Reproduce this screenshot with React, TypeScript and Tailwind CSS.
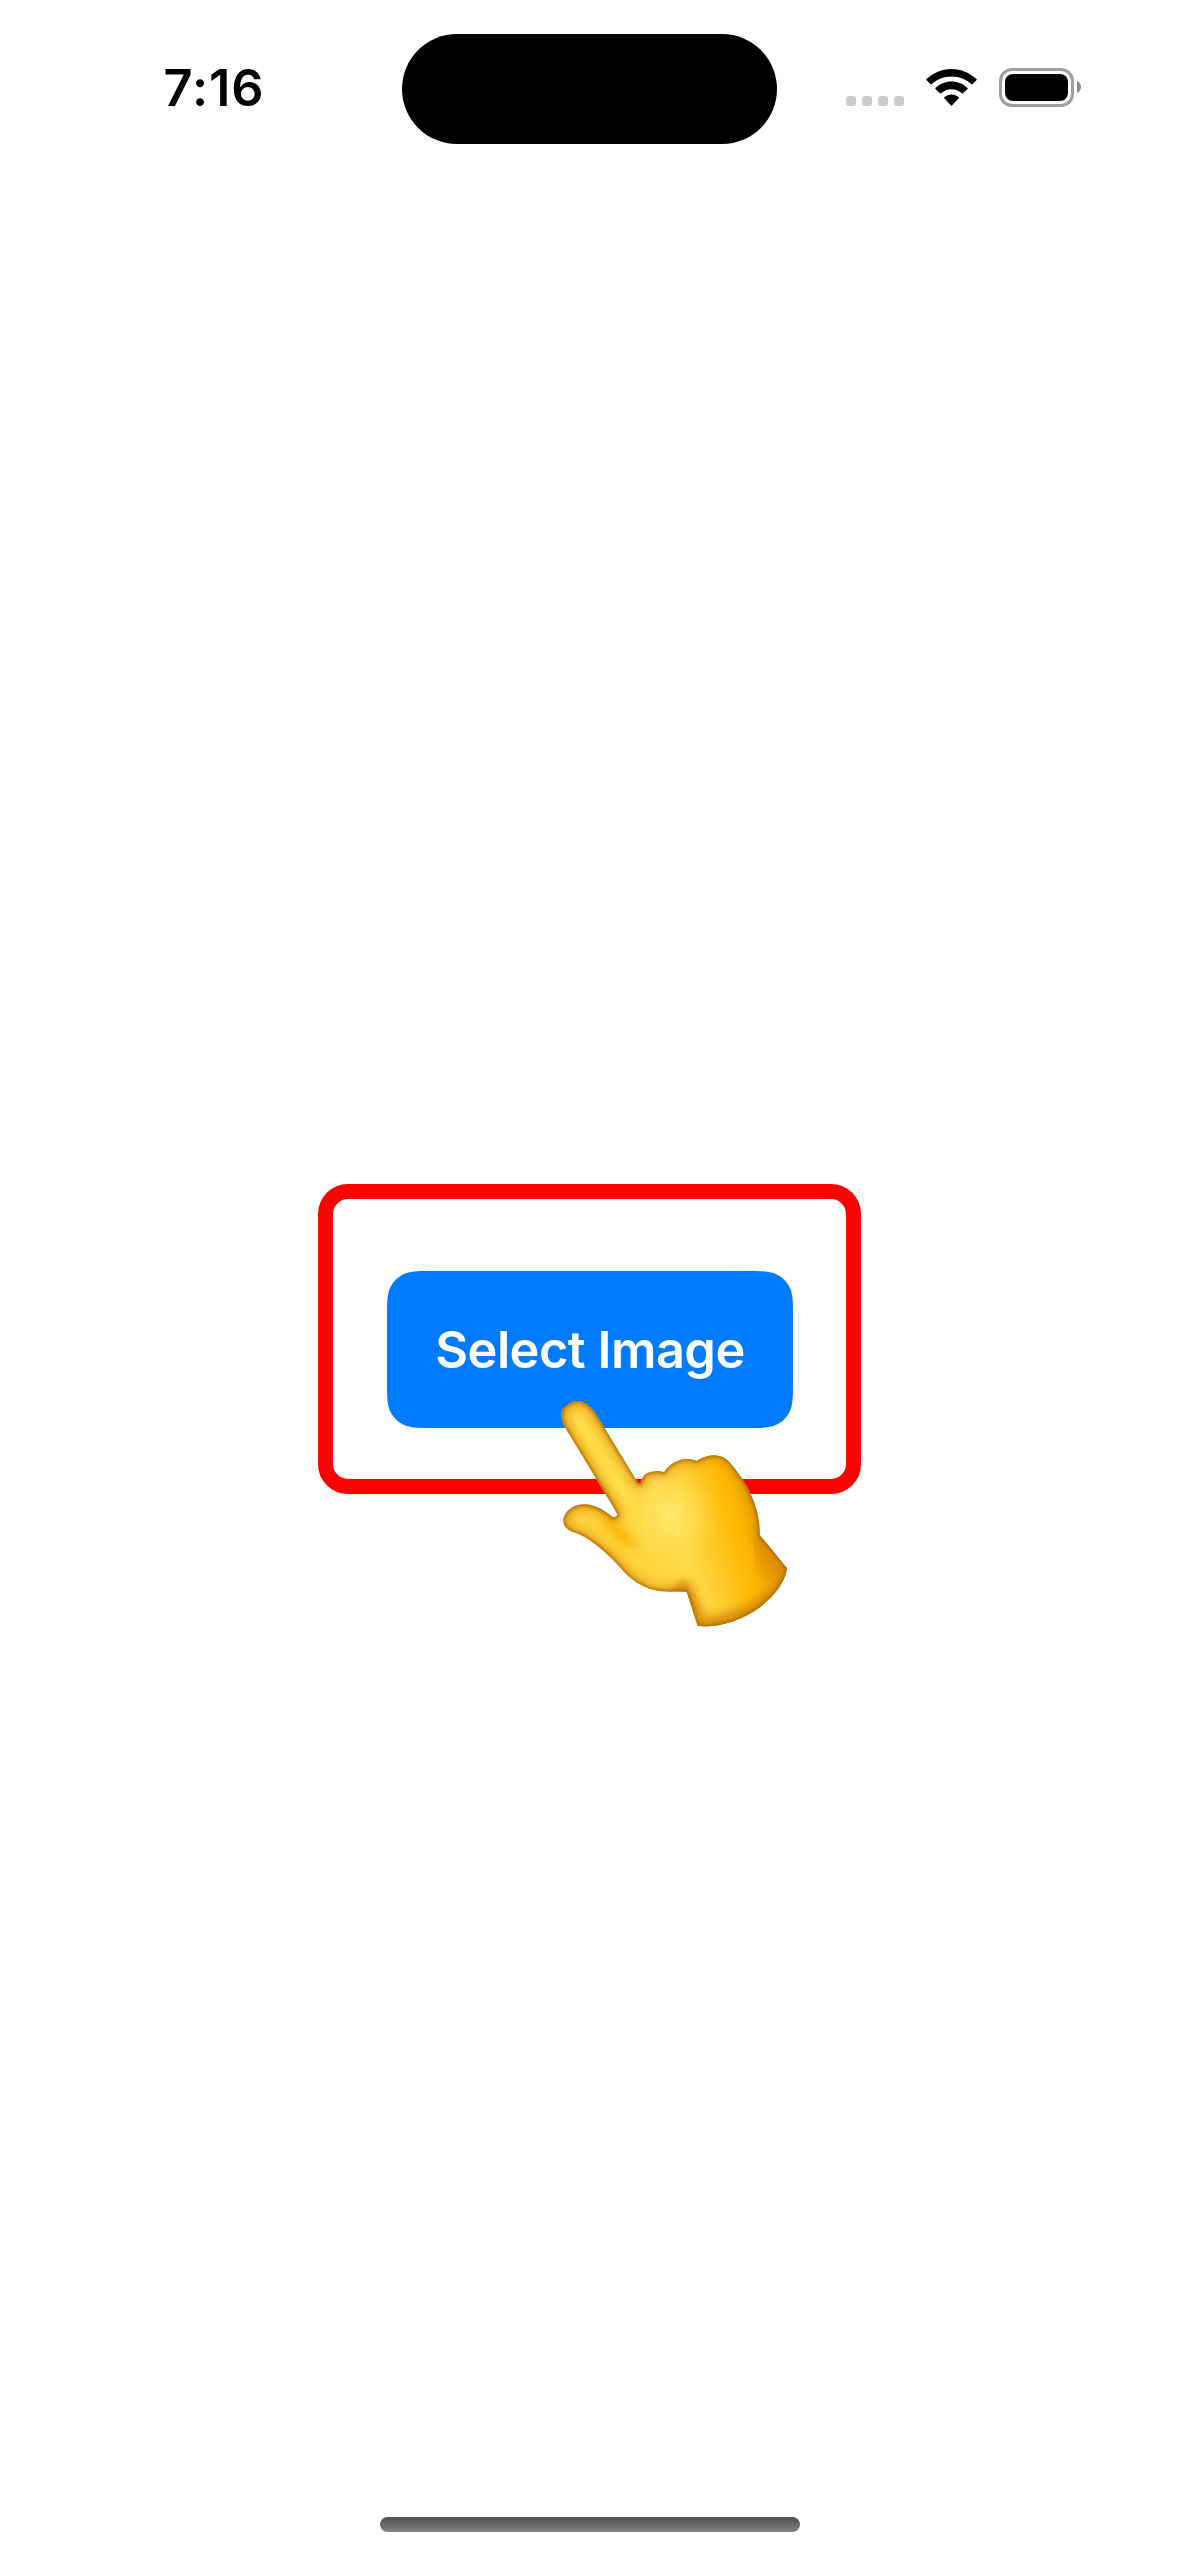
function WifiIcon() {
  return (
    <svg className="mt-[69px] ml-[22px] h-[37px] w-[51px] shrink-0" viewBox="0 0 51 37" fill="#000">
      <path d="M25.5 7.500C33.400 7.500 40.300 10.500 45.400 15.300Q45.900 15.800 46.400 15.300L50.600 11.100Q51 10.600 50.500 10.100C44 3.900 35.200 0 25.500 0S7 3.900.5 10.100Q0 10.600.4 11.100L4.600 15.300Q5.100 15.800 5.600 15.300C10.700 10.500 17.600 7.500 25.500 7.500Z" />
      <path d="M25.500 20.200C29.400 20.200 33.100 21.800 36 24.300Q36.500 24.700 37 24.300L41.500 20Q42 19.500 41.500 19C37.200 15 31.700 12.600 25.500 12.600S13.800 15 9.500 19Q9 19.500 9.500 20L14 24.300Q14.500 24.700 15 24.300C17.900 21.800 21.600 20.200 25.500 20.200Z" />
      <path d="M32.700 29.300Q33.200 28.800 32.700 28.300C30.700 26.500 28.200 25.400 25.500 25.400S20.300 26.500 18.300 28.300Q17.800 28.800 18.300 29.300L25 36.400Q25.500 36.900 26 36.400Z" />
    </svg>
  );
}

function StatusBar() {
  return (
    <header className="flex h-[170px] w-full shrink-0 items-start">
      <div className="w-[401.5px] pl-[163.5px] pt-[58px] text-[50.5px] font-[580] leading-[60px] tracking-[1px] whitespace-nowrap">
        7:16
      </div>
      <div className="mt-[33.5px] h-[110.5px] w-[375.5px] rounded-full bg-black" />
      <div className="ml-[69px] mt-[96px] flex gap-[6px]">
        <span className="size-[10px] rounded-[3px] bg-[#cbcbcb]" />
        <span className="size-[10px] rounded-[3px] bg-[#cbcbcb]" />
        <span className="size-[10px] rounded-[3px] bg-[#cbcbcb]" />
        <span className="size-[10px] rounded-[3px] bg-[#cbcbcb]" />
      </div>
      <WifiIcon />
      <div className="ml-[22px] mt-[68px] flex items-center gap-[3px]">
        <div className="h-[39px] w-[75px] rounded-[13px] border-3 border-[#9e9e9e] p-[3px]">
          <div className="h-[27px] w-[63px] rounded-[8px] bg-black" />
        </div>
        <svg className="-mt-[1px] h-[12px] w-[4px]" viewBox="0 0 4 12">
          <path d="M0 0C2.400 1 4 3.300 4 6S2.400 11 0 12Z" fill="#8a8a8a" />
        </svg>
      </div>
    </header>
  );
}

const handShape =
  "M75 142C62 120 60 95 72 82C82 75 92 65 108 63C123 61 140 70 150 80C158 88 165 97 172 108L290 302C294 309 298 313 302 308C304 292 318 277 335 275C348 272 360 273 372 277C385 255 412 238 438 237C450 237 460 239 470 243C485 233 505 225 525 226C545 228 560 235 570 248C590 272 605 292 622 322C650 375 660 420 659 465L741 565C735 610 700 650 660 682C600 725 530 745 473 738L440 635C400 634 370 637 345 631C305 622 270 598 240 562C210 528 170 492 130 469C118 462 105 458 96 455C78 448 66 432 71 414C78 388 105 372 137 373C170 375 195 393 215 409C222 415 230 412 232 403C228 395 222 386 218 378Z";

function PointingHand() {
  return (
    <svg className="absolute left-[207px] top-[181px] h-[260px] w-[270px]" viewBox="0 0 810 780">
      <defs>
        <clipPath id="hand-clip">
          <path d={handShape} />
        </clipPath>
        <linearGradient id="hand-base" gradientUnits="userSpaceOnUse" x1="250" y1="500" x2="720" y2="380">
          <stop offset="0" stopColor="#ffd23a" />
          <stop offset="0.35" stopColor="#ffda48" />
          <stop offset="0.52" stopColor="#ffcb2c" />
          <stop offset="0.68" stopColor="#ffbb05" />
          <stop offset="1" stopColor="#e69900" />
        </linearGradient>
        <radialGradient id="hand-glow" gradientUnits="userSpaceOnUse" cx="390" cy="410" r="150">
          <stop offset="0" stopColor="#ffea6c" />
          <stop offset="1" stopColor="#ffe055" stopOpacity="0" />
        </radialGradient>
        <filter id="soft-s" x="-20%" y="-20%" width="140%" height="140%">
          <feGaussianBlur stdDeviation="5" />
        </filter>
        <filter id="soft-l" x="-40%" y="-40%" width="180%" height="180%">
          <feGaussianBlur stdDeviation="14" />
        </filter>
      </defs>
      <g clipPath="url(#hand-clip)">
        <rect width="810" height="780" fill="url(#hand-base)" />
        <path d="M110 115L270 370" stroke="#ffdf50" strokeWidth="36" strokeLinecap="round" filter="url(#soft-l)" />
        <circle cx="390" cy="410" r="150" fill="url(#hand-glow)" />
        <path d="M190 415C225 430 260 465 285 500L245 480Z" fill="#ffb400" stroke="#ffb400" strokeWidth="14" filter="url(#soft-l)" />
        <path d="M390 640C425 585 450 590 455 640L480 735Z" fill="#dc9210" filter="url(#soft-l)" />
        <path d="M440 650L500 740L640 690" fill="none" stroke="#dd9a1a" strokeWidth="50" opacity="0.5" filter="url(#soft-l)" />
        <path d="M659 465L741 565C735 610 700 650 660 682C600 725 530 745 473 738" fill="none" stroke="#d48800" strokeWidth="40" opacity="0.75" filter="url(#soft-l)" />
        <path d="M659 475L700 590" stroke="#e69400" strokeWidth="60" opacity="0.9" filter="url(#soft-l)" />
        <path d={handShape} fill="none" stroke="#d08408" strokeWidth="30" opacity="0.6" filter="url(#soft-l)" />
        <path d={handShape} fill="none" stroke="#a86a08" strokeWidth="11" opacity="0.85" filter="url(#soft-s)" />
      </g>
    </svg>
  );
}

export default function App() {
  return (
    <div className="flex h-[2556px] w-[1179px] flex-col items-center overflow-hidden bg-white font-['Inter','Liberation_Sans',sans-serif] text-black">
      <StatusBar />
      <main className="flex w-full grow flex-col pl-[318px] pt-[1014px]">
        <section className="relative h-[310px] w-[543px] rounded-[30px] border-[15px] border-[#ff0000] pl-[54px] pt-[72px]">
          <button className="h-[157px] w-[406px] bg-[#007aff] text-center text-[50.5px] font-[570] leading-[60px] tracking-[-0.5px] whitespace-nowrap text-white [clip-path:path('M45.9_0H360.100C373.300_0_380_0_387.100_2.200C394.800_5.100_400.900_11.200_403.800_18.900C406_26.100_406_32.700_406_45.900V111.100C406_124.300_406_130.900_403.800_138.100C400.900_145.800_394.800_151.900_387.100_154.800C380_157_373.300_157_360.100_157H45.900C32.700_157_26_157_18.900_154.800C11.200_151.900_5.100_145.800_2.200_138.100C0_130.900_0_124.300_0_111.100V45.900C0_32.700_0_26.100_2.200_18.900C5.100_11.200_11.200_5.100_18.900_2.200C26_0_32.700_0_45.900_0Z')]">
            Select Image
          </button>
          <PointingHand />
        </section>
      </main>
      <div className="mb-[24px] h-[15px] w-[420px] shrink-0 rounded-full bg-linear-to-b from-[#505050] to-[#828282]" />
    </div>
  );
}
